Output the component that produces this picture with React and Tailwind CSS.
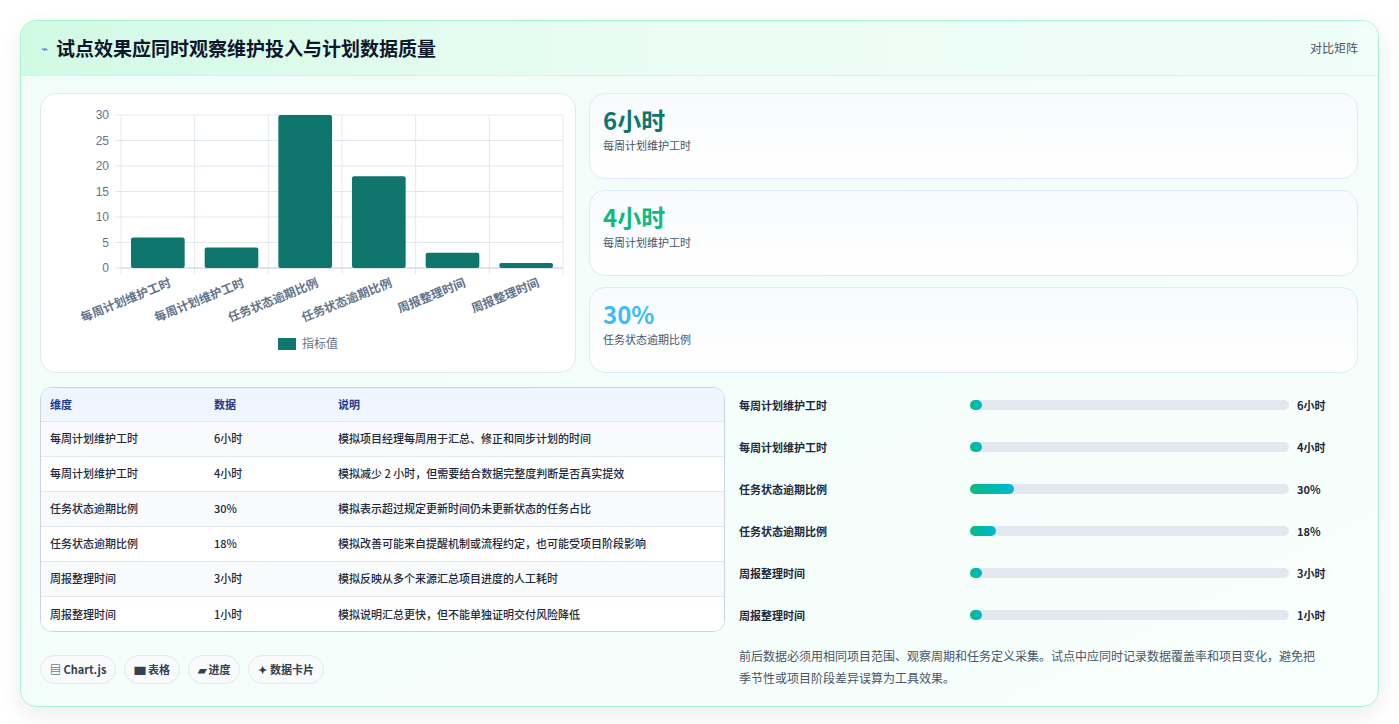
import React from "react";

const font = { fontFamily: '"Noto Sans CJK SC", "Noto Sans", sans-serif' };
const bars = [
  ["每周计划维护工时", 6],
  ["每周计划维护工时", 4],
  ["任务状态逾期比例", 30],
  ["任务状态逾期比例", 18],
  ["周报整理时间", 3],
  ["周报整理时间", 1],
];
const rows = [
  ["每周计划维护工时", "6小时", "模拟项目经理每周用于汇总、修正和同步计划的时间"],
  ["每周计划维护工时", "4小时", "模拟减少 2 小时，但需要结合数据完整度判断是否真实提效"],
  ["任务状态逾期比例", "30%", "模拟表示超过规定更新时间仍未更新状态的任务占比"],
  ["任务状态逾期比例", "18%", "模拟改善可能来自提醒机制或流程约定，也可能受项目阶段影响"],
  ["周报整理时间", "3小时", "模拟反映从多个来源汇总项目进度的人工耗时"],
  ["周报整理时间", "1小时", "模拟说明汇总更快，但不能单独证明交付风险降低"],
];
const prog = [
  ["每周计划维护工时", "6小时", 12],
  ["每周计划维护工时", "4小时", 12],
  ["任务状态逾期比例", "30%", 44],
  ["任务状态逾期比例", "18%", 26],
  ["周报整理时间", "3小时", 12],
  ["周报整理时间", "1小时", 12],
];

function Chart() {
  const x0 = 80, x1 = 522, y0 = 174, yTop = 21;
  const cw = (x1 - x0) / 6;
  const sc = (y0 - yTop) / 30;
  return (
    <svg width="534" height="277" style={{ fontFamily: '"Liberation Sans", "Noto Sans CJK SC", sans-serif' }}>
      {[0, 5, 10, 15, 20, 25, 30].map((v) => {
        const y = y0 - v * sc;
        return (
          <g key={v}>
            <line x1={x0 - 6} x2={x1} y1={y} y2={y} stroke="#e2e8f0" />
            <text x={x0 - 12} y={y + 4} textAnchor="end" fontSize="12" fill="#64748b">{v}</text>
          </g>
        );
      })}
      {Array.from({ length: 7 }).map((_, i) => (
        <line key={i} x1={x0 + i * cw} x2={x0 + i * cw} y1={yTop} y2={y0 + 6} stroke="#e2e8f0" />
      ))}
      <line x1={x0} x2={x1} y1={y0} y2={y0} stroke="#cbd5e1" />
      {bars.map(([l, v], i) => {
        const bx = x0 + i * cw + 10;
        const h = v * sc;
        const tx = x0 + i * cw + cw / 2 + 14;
        return (
          <g key={i}>
            <rect x={bx} y={y0 - h} width={cw - 20} height={h} rx="2" fill="#0f766e" />
            <text x={tx} y={y0 + 18} textAnchor="end" fontSize="12" fontWeight="600" fill="#64748b" transform={`rotate(-22 ${tx} ${y0 + 18})`} style={{ fontFamily: '"Noto Sans CJK SC", sans-serif' }}>{l}</text>
          </g>
        );
      })}
      <rect x="237" y="244" width="18" height="12" fill="#0f766e" />
      <text x="261" y="254" fontSize="12" fill="#64748b" style={{ fontFamily: '"Noto Sans CJK SC", sans-serif' }}>指标值</text>
    </svg>
  );
}

export default function App() {
  return (
    <div className="min-h-screen bg-white p-5" style={font}>
      <div className="rounded-2xl border border-[#a7f3d0] bg-gradient-to-br from-[#f0fdf9] to-[#f8fffd] shadow-[0_8px_24px_rgba(15,23,42,0.08)] overflow-hidden">
        <div className="h-[55px] flex items-center justify-between px-5 bg-gradient-to-r from-[#d1fae5] via-[#ecfdf5] to-[#f0fdfa] border-b border-[#dbeafe]">
          <div className="flex items-center gap-2">
            <span className="text-[#3b82f6] text-xs">⌁</span>
            <h1 className="text-[19px] font-bold text-[#0f172a]">试点效果应同时观察维护投入与计划数据质量</h1>
          </div>
          <span className="text-[12px] text-[#475569]">对比矩阵</span>
        </div>
        <div className="pl-[19px] pr-5 pt-[17px] pb-[17px] flex flex-col gap-[14px]">
          <div className="flex gap-[13px]">
            <div className="w-[536px] h-[280px] rounded-2xl border border-[#e2e8f0] bg-white">
              <Chart />
            </div>
            <div className="flex-1 flex flex-col gap-[11px]">
              {[["6小时", "text-[#0f766e]", "每周计划维护工时"], ["4小时", "text-[#10b981]", "每周计划维护工时"], ["30%", "text-[#38bdf8]", "任务状态逾期比例"]].map(([v, c, l], i) => (
                <div key={i} className="h-[86px] rounded-2xl border border-[#dbeafe] bg-gradient-to-b from-[#f8fafc] to-white px-[13px] pt-[10px]">
                  <div className={`text-[24px] font-bold leading-[32px] ${c}`}>{v}</div>
                  <div className="text-[11px] text-[#475569] mt-[1px]">{l}</div>
                </div>
              ))}
            </div>
          </div>
          <div className="flex gap-[14px]">
            <div className="w-[685px] flex flex-col">
              <div className="rounded-xl border border-[#cbd5e1] overflow-hidden bg-white">
                <table className="w-full text-[11px] text-[#1e293b] font-medium">
                  <thead>
                    <tr className="bg-[#eff6ff] h-[33px] text-[#1e3a8a]">
                      <th className="text-left pl-[9px] w-[173px] font-semibold">维度</th>
                      <th className="text-left w-[124px] font-semibold">数据</th>
                      <th className="text-left font-semibold">说明</th>
                    </tr>
                  </thead>
                  <tbody>
                    {rows.map((r, i) => (
                      <tr key={i} className={`h-[35px] border-t border-[#e2e8f0] ${i % 2 === 0 ? "bg-[#f8fafc]" : "bg-white"}`}>
                        <td className="pl-[9px]">{r[0]}</td>
                        <td>{r[1]}</td>
                        <td>{r[2]}</td>
                      </tr>
                    ))}
                  </tbody>
                </table>
              </div>
              <div className="flex gap-2 mt-[23px]">
                {["▤ Chart.js", "▆ 表格", "▰ 进度", "✦ 数据卡片"].map((t) => (
                  <span key={t} className="h-[29px] px-[9px] flex items-center rounded-full border border-[#e2e8f0] bg-[#f8fafc] text-[11px] font-semibold text-[#334155]">{t}</span>
                ))}
              </div>
            </div>
            <div className="flex-1 flex flex-col -mt-[3px]">
              <div className="flex flex-col">
                {prog.map(([l, v, w], i) => (
                  <div key={i} className="h-[42px] flex items-center text-[11px] font-semibold text-[#1e293b]">
                    <span className="w-[231px]">{l}</span>
                    <div className="w-[319px] h-[10px] rounded-full bg-[#e2e8f0]">
                      <div className="h-full rounded-full bg-gradient-to-r from-[#10b981] to-[#06b6d4]" style={{ width: w }} />
                    </div>
                    <span className="ml-2">{v}</span>
                  </div>
                ))}
              </div>
              <p className="mt-[9px] text-[12px] leading-[22px] text-[#475569] pr-9">前后数据必须用相同项目范围、观察周期和任务定义采集。试点中应同时记录数据覆盖率和项目变化，避免把季节性或项目阶段差异误算为工具效果。</p>
            </div>
          </div>
        </div>
      </div>
    </div>
  );
}
